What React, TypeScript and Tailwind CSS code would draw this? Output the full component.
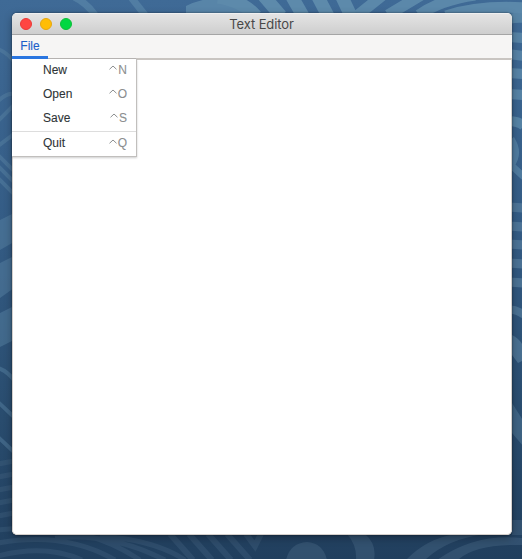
const lights = [
  'bg-[#ff4642] border-[#ea3935]',
  'bg-[#ffbd05] border-[#e6a60f]',
  'bg-[#00d742] border-[#0dbd38]',
];

const items = [
  { label: 'New', key: 'N' },
  { label: 'Open', key: 'O' },
  { label: 'Save', key: 'S' },
];

function Wallpaper() {
  return (
    <svg className="absolute inset-0" width="522" height="559" viewBox="0 0 522 559" fill="none">
      <defs>
        <linearGradient id="sea" x1="0" y1="0" x2="0" y2="1">
          <stop offset="0" stopColor="#3f6a96" />
          <stop offset="0.4" stopColor="#345c85" />
          <stop offset="0.75" stopColor="#294c6e" />
          <stop offset="1" stopColor="#213f5e" />
        </linearGradient>
      </defs>
      <rect width="522" height="559" fill="url(#sea)" />
      <g stroke="#5d8aab">
        <path d="M72-4Q86 2 95 15M130-4L145 15" strokeWidth="7" opacity=".6" />
        <path d="M186 16V6Q210-6 240 0L262 16Z" fill="#5d8aab" stroke="none" opacity=".85" />
        <path d="M218-3Q243 1 256 16M263-5L281 16M291-5L303 16M317-5L328 16M341-5L351 16" strokeWidth="13" />
        <path d="M358 15L383-5M388 15L423-6M419 15Q440 0 475-5M446 16Q480 5 526 8" strokeWidth="11" opacity=".95" />
      </g>
      <g stroke="#5c89aa" strokeWidth="12" opacity=".85">
        <path d="M508 19Q518 17 524 18M508 37L524 38M508 54L524 56M508 73L524 74M508 94L524 95M508 121Q519 121 524 126" strokeWidth="10" />
        <path d="M511 139Q520 153 511 165L524 177" strokeWidth="7" opacity=".8" />
      </g>
      <g stroke="#5d84a3" strokeWidth="9" opacity=".6">
        <path d="M508 207L524 208M508 226L524 227M508 244L524 245M508 263L524 264M508 282L524 283" />
        <path d="M508 309Q518 310 524 315" strokeWidth="8" />
        <path d="M512 335Q519 338 524 347V360L518 363L512 355Z" fill="#5d84a3" stroke="none" />
        <path d="M512 403L524 422V447L512 433Z" fill="#5d84a3" stroke="none" opacity=".7" />
      </g>
      <g stroke="#5b85a5" strokeWidth="4" opacity=".45">
        <path d="M-2 49Q8 53 14 62M-2 101Q8 92 14 94M-2 121L14 105M-2 146L14 134M-2 155L14 171M-2 166L14 182M-2 178L14 194" />
        <path d="M0 220L14 213V242L0 250ZM0 263L14 256V288L0 298ZM0 313L14 306V340L0 347Z" fill="#5b85a5" stroke="none" />
        <path d="M-2 368Q7 371 14 380M-2 402L14 417M-2 437L14 452" />
      </g>
      <g stroke="#50708d" strokeWidth="5" opacity=".26">
        <path d="M-2 464L14 461M-2 477L14 474M-2 490L14 487M-2 503L14 500M-2 516L14 513M-2 530Q80 520 140 560M-2 543Q65 531 115 560M-2 556Q45 544 82 560M55 538Q110 532 165 560M100 536Q155 540 185 560" />
        <path d="M170 534L193 560M189 534L212 560M208 534L231 560M227 534L250 560M246 534L255 546L261 534" strokeWidth="6" />
      </g>
      <g opacity=".3" fill="#597894">
        <path d="M286 560Q290 543 307 542Q323 543 327 560Z" />
        <path d="M347 534H365Q377 544 374 560H356Q357 545 347 534ZM406 560Q426 539 455 534H485Q447 539 425 560ZM437 560Q475 533 522 538V545Q475 544 458 560ZM512 520H522V535H512Z" />
      </g>
    </svg>
  );
}

function Shortcut({ letter }: { letter: string }) {
  return (
    <span className="flex items-center text-[#8b8e8f]">
      <svg className="mr-px mb-[4px]" width="8" height="5" viewBox="0 0 8 5" fill="none" stroke="currentColor">
        <path d="M.5 4.3L4 1L7.5 4.3" />
      </svg>
      {letter}
    </span>
  );
}

export default function App() {
  return (
    <div className="relative h-[559px] w-[522px] overflow-hidden font-['Liberation_Sans',Arial,sans-serif] text-[12px] [-webkit-text-stroke:0.1px]">
      <Wallpaper />
      <div className="relative pt-[13px] pl-[12px]">
        <div className="flex h-[522px] w-[500px] flex-col overflow-hidden rounded-[5px] bg-[#f6f5f4] shadow-[0_0_2px_rgba(0,0,0,0.55),0_3px_9px_rgba(0,0,0,0.3)]">
          <header className="grid h-[22px] shrink-0 grid-cols-[1fr_auto_1fr] items-center border-t border-b border-t-[#f0f0f0] border-b-[#a5a5a5] bg-linear-to-b from-[#e4e4e4] to-[#cecece]">
            <div className="flex gap-2 pl-2">
              {lights.map((c) => (
                <span key={c} className={`size-3 rounded-full border ${c}`} />
              ))}
            </div>
            <h1 className="pt-px pr-px font-['Inter',sans-serif] text-[13px] leading-[19px] tracking-[-0.1px] text-[#484848] [-webkit-text-stroke:0px]">Text Editor</h1>
          </header>
          <nav className="flex h-[23px] shrink-0">
            <button className="relative z-10 flex h-[24px] w-9 items-center justify-center border-b-[3px] border-[#2a76e0] text-[#1b5fc9]">File</button>
          </nav>
          <main className="min-h-0 flex-1 rounded-b-[5px] border border-t-2 border-[#d5d0cc] border-t-[#c9c5c1] bg-white" />
        </div>
        <div className="absolute top-[59px] left-[12px] w-[125px] border-r border-b border-[#c1bfbd] bg-white text-[#2e3436] shadow-[0_1px_2px_rgba(0,0,0,0.2)]">
          <div className="-mt-px ml-9 h-px bg-[#b5b2b0]" />
          <div className="-mt-px pb-px">
            {items.map((i) => (
              <div key={i.label} className="flex h-6 items-center justify-between pr-[9px] pb-px pl-[31px]">
                <span>{i.label}</span>
                <Shortcut letter={i.key} />
              </div>
            ))}
          </div>
          <div className="flex h-[25px] items-center justify-between border-t border-[#dddddd] pr-[9px] pb-[2px] pl-[31px]">
            <span>Quit</span>
            <Shortcut letter="Q" />
          </div>
        </div>
      </div>
    </div>
  );
}
